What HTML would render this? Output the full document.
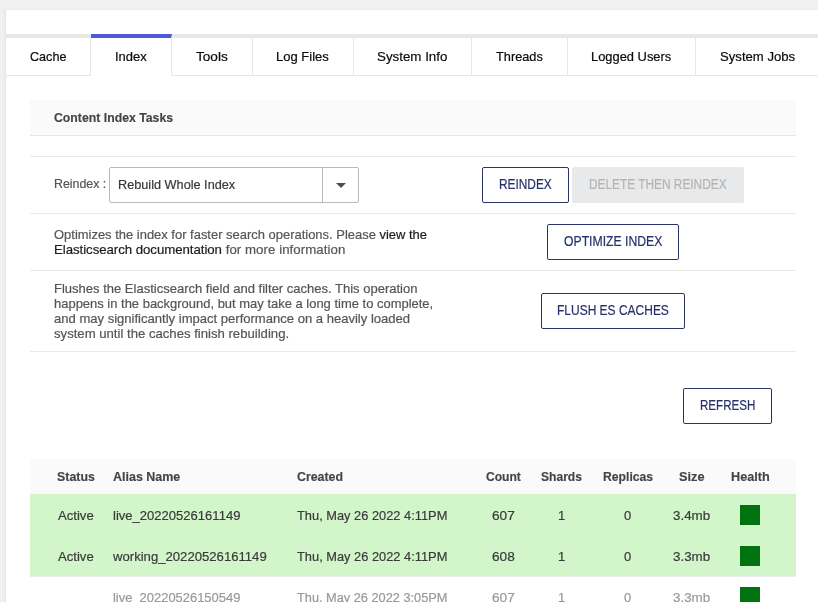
<!DOCTYPE html>
<html lang="en">
<head>
<meta charset="utf-8">
<title>Maintenance - Index</title>
<style>
html,body{margin:0;padding:0;}
html{width:818px;height:602px;overflow:hidden;background:#eef0f2;}
body{will-change:transform;width:818px;height:602px;overflow:hidden;background:#eef0f2;font-family:"Liberation Sans",sans-serif;font-size:13px;line-height:15px;position:relative;}
.panel{position:absolute;left:6px;top:10px;width:812px;height:592px;background:#fff;box-shadow:-1px 0 2px rgba(0,0,0,.06);}
.tabstrip{position:absolute;left:6px;top:34px;width:812px;height:4px;background:#e7e8e9;}
.tabline{position:absolute;left:6px;top:75px;width:812px;height:1px;background:#e6e6e6;}
.tab{position:absolute;top:38px;height:37px;border-right:1px solid #e7e7e7;box-sizing:border-box;}
.tab.active{top:34px;height:42px;border-top:4px solid #4f57db;background:#fff;}
.t{-webkit-text-stroke:0.2px currentColor;position:absolute;transform-origin:0 50%;white-space:nowrap;line-height:15px;font-size:13px;font-weight:400;margin:0;padding:0;}
.t.tl{color:#0a0a0a;}
.t.b{font-weight:700;color:#444;-webkit-text-stroke:0.15px currentColor;}
.t.n{color:#555;}
.t a{color:#1c1c1c;text-decoration:none;}
.t.sel{color:#383838;}
.t.btn{color:#27316a;font-size:14px;}
.t.dis{color:#b4b4b4;font-size:14px;}
.t.r{color:#3a3a3a;}
.t.g{color:#999;}
.box{position:absolute;box-sizing:border-box;margin:0;padding:0;}
.hbar{background:#fafafa;border-bottom:1px solid #e5e5e5;}
.line{position:absolute;left:30px;width:766px;height:1px;background:#e9e9e9;}
.button{border:1px solid #293366;border-radius:2px;background:#fff;}
.button.disabled{border:0;background:#e8e9ea;}
.select{border:1px solid #b8b8b8;border-radius:2px;background:#fff;}
.select .div{position:absolute;right:35px;top:0;bottom:0;width:1px;background:#b8b8b8;}
.select .arrow{position:absolute;left:226px;top:15px;width:0;height:0;border-left:5px solid transparent;border-right:5px solid transparent;border-top:5px solid #4d4d4d;}
.rowg{background:#d2f5c9;}
.health{position:absolute;left:710px;background:#00720f;width:20px;height:20px;}
#tab1{left:24px;top:11px;transform:scaleX(0.9700);}
#tab2{left:24px;top:11px;transform:scaleX(0.9974);}
#tab3{left:24px;top:11px;transform:scaleX(1.0465);}
#tab4{left:23px;top:11px;transform:scaleX(1.0015);}
#tab5{left:23px;top:11px;transform:scaleX(1.0256);}
#tab6{left:24px;top:11px;transform:scaleX(0.9809);}
#tab7{left:23px;top:11px;transform:scaleX(0.9913);}
#tab8{left:24px;top:11px;transform:scaleX(1.0098);}
#hdr{left:24px;top:10px;transform:scaleX(0.9435);}
#lbl{left:54px;top:176px;transform:scaleX(0.9512);}
#sel{left:8px;top:9px;transform:scaleX(0.9769);}
#b1{left:16px;top:9px;transform:scaleX(0.8474);}
#b2{left:17px;top:10px;transform:scaleX(0.8475);}
#p1a{left:54px;top:227px;transform:scaleX(0.9965);}
#p1c{left:54px;top:242px;transform:scaleX(1.0185);}
#b3{left:16px;top:9px;transform:scaleX(0.8721);}
#p2a{left:54px;top:281px;transform:scaleX(1.0006);}
#p2b{left:54px;top:296px;transform:scaleX(0.9975);}
#p2c{left:54px;top:311px;transform:scaleX(1.0036);}
#p2d{left:54px;top:326px;transform:scaleX(1.0104);}
#b4{left:15px;top:9px;transform:scaleX(0.8559);}
#b5{left:16px;top:9px;transform:scaleX(0.8276);}
#th1{left:27px;top:10px;transform:scaleX(0.9526);}
#th2{left:83px;top:10px;transform:scaleX(0.9598);}
#th3{left:267px;top:10px;transform:scaleX(0.9508);}
#th4{left:456px;top:10px;transform:scaleX(0.9292);}
#th5{left:511px;top:10px;transform:scaleX(0.9289);}
#th6{left:573px;top:10px;transform:scaleX(0.9365);}
#th7{left:649px;top:10px;transform:scaleX(0.9815);}
#th8{left:701px;top:10px;transform:scaleX(0.9756);}
#r0c0{left:28px;top:14px;transform:scaleX(1.0088);}
#r0c1{left:83px;top:14px;transform:scaleX(1.0034);}
#r0c2{left:267px;top:14px;transform:scaleX(0.9877);}
#r0c3{left:462px;top:14px;transform:scaleX(1.0479);}
#r0c4{left:528px;top:14px;}
#r0c5{left:594px;top:14px;}
#r0c6{left:643px;top:14px;transform:scaleX(1.0263);}
#r1c0{left:28px;top:13px;transform:scaleX(1.0088);}
#r1c1{left:83px;top:13px;transform:scaleX(1.0094);}
#r1c2{left:267px;top:13px;transform:scaleX(0.9877);}
#r1c3{left:462px;top:13px;transform:scaleX(1.0485);}
#r1c4{left:528px;top:13px;}
#r1c5{left:594px;top:13px;}
#r1c6{left:643px;top:13px;transform:scaleX(1.0263);}
#r2c1{left:83px;top:13px;transform:scaleX(0.9953);}
#r2c2{left:267px;top:13px;transform:scaleX(0.9820);}
#r2c3{left:462px;top:13px;transform:scaleX(1.0479);}
#r2c4{left:528px;top:13px;}
#r2c5{left:594px;top:13px;}
#r2c6{left:643px;top:13px;transform:scaleX(1.0263);}
</style>
</head>
<body>
<div class="panel"></div>
<div class="tabstrip"></div>
<div class="tabline"></div>
<div class="tabs" role="tablist">
<div class="tab" role="tab" style="left:6px;width:85px"><span id="tab1" class="t tl">Cache</span></div>
<div class="tab active" role="tab" aria-selected="true" style="left:91px;width:81px"><span id="tab2" class="t tl">Index</span></div>
<div class="tab" role="tab" style="left:172px;width:81px"><span id="tab3" class="t tl">Tools</span></div>
<div class="tab" role="tab" style="left:253px;width:101px"><span id="tab4" class="t tl">Log Files</span></div>
<div class="tab" role="tab" style="left:354px;width:118px"><span id="tab5" class="t tl">System Info</span></div>
<div class="tab" role="tab" style="left:472px;width:96px"><span id="tab6" class="t tl">Threads</span></div>
<div class="tab" role="tab" style="left:568px;width:128px"><span id="tab7" class="t tl">Logged Users</span></div>
<div class="tab" role="tab" style="left:696px;width:122px;border-right:0"><span id="tab8" class="t tl">System Jobs</span></div>
</div>

<div class="box hbar" style="left:30px;top:100px;width:766px;height:36px"><span id="hdr" class="t b">Content Index Tasks</span></div>
<div class="line" style="top:156px"></div>
<span id="lbl" class="t n">Reindex :</span>
<div class="box select" style="left:109px;top:167px;width:250px;height:36px"><span id="sel" class="t sel">Rebuild Whole Index</span><div class="div"></div><div class="arrow"></div></div>
<div class="box button" style="left:482px;top:167px;width:87px;height:36px"><span id="b1" class="t btn">REINDEX</span></div>
<div class="box button disabled" style="left:572px;top:167px;width:172px;height:36px"><span id="b2" class="t dis">DELETE THEN REINDEX</span></div>
<div class="line" style="top:213px"></div>
<span id="p1a" class="t n">Optimizes the index for faster search operations. Please <a>view the</a></span>
<span id="p1c" class="t n"><a style="letter-spacing:-0.05px">Elasticsearch documentation</a><span style="letter-spacing:0.06px"> for more information</span></span>
<div class="box button" style="left:547px;top:224px;width:132px;height:36px"><span id="b3" class="t btn">OPTIMIZE INDEX</span></div>
<div class="line" style="top:270px"></div>
<span id="p2a" class="t n">Flushes the Elasticsearch field and filter caches. This operation</span>
<span id="p2b" class="t n">happens in the background, but may take a long time to complete,</span>
<span id="p2c" class="t n">and may significantly impact performance on a heavily loaded</span>
<span id="p2d" class="t n">system until the caches finish rebuilding.</span>
<div class="box button" style="left:541px;top:293px;width:144px;height:36px"><span id="b4" class="t btn">FLUSH ES CACHES</span></div>
<div class="line" style="top:351px"></div>
<div class="box button" style="left:683px;top:388px;width:89px;height:36px"><span id="b5" class="t btn">REFRESH</span></div>

<div class="box hbar" style="left:30px;top:459px;width:766px;height:35px;border-bottom:0"><span id="th1" class="t b">Status</span><span id="th2" class="t b">Alias Name</span><span id="th3" class="t b">Created</span><span id="th4" class="t b">Count</span><span id="th5" class="t b">Shards</span><span id="th6" class="t b">Replicas</span><span id="th7" class="t b">Size</span><span id="th8" class="t b">Health</span></div>
<div class="box rowg" style="left:30px;top:494px;width:766px;height:42px;border-bottom:1px solid #e4ebe2"><span id="r0c0" class="t r">Active</span><span id="r0c1" class="t r">live_20220526161149</span><span id="r0c2" class="t r">Thu, May 26 2022 4:11PM</span><span id="r0c3" class="t r">607</span><span id="r0c4" class="t r">1</span><span id="r0c5" class="t r">0</span><span id="r0c6" class="t r">3.4mb</span><div class="health" style="top:11px"></div></div>
<div class="box rowg" style="left:30px;top:536px;width:766px;height:41px;border-bottom:1px solid #ececec"><span id="r1c0" class="t r">Active</span><span id="r1c1" class="t r">working_20220526161149</span><span id="r1c2" class="t r">Thu, May 26 2022 4:11PM</span><span id="r1c3" class="t r">608</span><span id="r1c4" class="t r">1</span><span id="r1c5" class="t r">0</span><span id="r1c6" class="t r">3.3mb</span><div class="health" style="top:10px"></div></div>
<div class="box" style="left:30px;top:577px;width:766px;height:25px;overflow:hidden"><span id="r2c1" class="t g">live_20220526150549</span><span id="r2c2" class="t g">Thu, May 26 2022 3:05PM</span><span id="r2c3" class="t g">607</span><span id="r2c4" class="t g">1</span><span id="r2c5" class="t g">0</span><span id="r2c6" class="t g">3.3mb</span><div class="health" style="top:10px"></div></div>
</body>
</html>
